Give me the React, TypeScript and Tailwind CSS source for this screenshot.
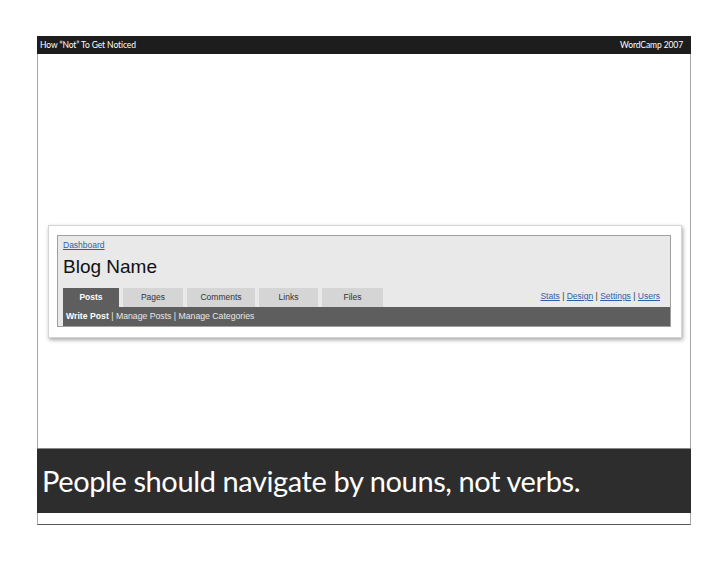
export default function App() {
  const tabs = [
    { label: "Posts", w: "w-[56px]", active: true },
    { label: "Pages", w: "w-[60px]" },
    { label: "Comments", w: "w-[68px]" },
    { label: "Links", w: "w-[59px]" },
    { label: "Files", w: "w-[61px]" },
  ];

  return (
    <div className="w-[728px] h-[563px] bg-white pt-[36px] pl-[37px]">
      <div className="w-[654px] h-[489px] flex flex-col border-x border-b border-x-[#a8a8a8] border-b-[#555]">
        {/* slide header */}
        <div className="h-[18px] -mx-px bg-[#1d1d1d] flex items-center justify-between pl-[3px] pr-[8px] text-white text-[8.5px] font-['Lato',sans-serif] tracking-[-0.1px]">
          <span>How “Not” To Get Noticed</span>
          <span>WordCamp 2007</span>
        </div>

        {/* screenshot area */}
        <div className="flex-1 pt-[171px] pl-[10px]">
          <div className="w-[634px] h-[113px] bg-white border border-[#d4d4d4] shadow-[1px_2px_4px_rgba(0,0,0,0.35)] pt-[9px] pl-[8px]">
            <div className="w-[614px] h-[92px] bg-[#e9e9e9] border border-[#a0a0a0] flex flex-col font-['Liberation_Sans',Arial,sans-serif]">
              <div className="pl-[5px] pt-[4px] h-[20px] text-[8.5px] leading-[10px]">
                <span className="text-[#2f5fa8] underline">Dashboard</span>
              </div>
              <div className="pl-[5px] h-[32px] flex items-start">
                <span className="text-[19px] leading-[22px] text-[#111]">Blog Name</span>
              </div>
              <div className="flex items-end justify-between pl-[5px] pr-[10px] h-[19px]">
                <div className="flex gap-[4px] h-[19px]">
                  {tabs.map((t) => (
                    <div
                      key={t.label}
                      className={
                        t.active
                          ? `${t.w} bg-[#5e5e5e] text-white font-bold text-[8.5px] flex items-center justify-center`
                          : `${t.w} bg-[#d5d5d5] text-[#333] text-[8.5px] flex items-center justify-center`
                      }
                    >
                      {t.label}
                    </div>
                  ))}
                </div>
                <div className="text-[8.5px] leading-[10px] text-[#333] pb-[6px]">
                  <span className="text-[#2f5fa8] underline">Stats</span> | <span className="text-[#2f5fa8] underline">Design</span> | <span className="text-[#2f5fa8] underline">Settings</span> | <span className="text-[#2f5fa8] underline">Users</span>
                </div>
              </div>
              <div className="ml-[5px] flex-1 bg-[#5e5e5e] flex items-center pl-[3px] text-[8.7px] text-[#e8e8e8]">
                <span className="font-bold text-white">Write Post</span>
                <span>&nbsp;| Manage Posts | Manage Categories</span>
              </div>
            </div>
          </div>
        </div>

        {/* caption */}
        <div className="h-[65px] -mx-px bg-[#2d2d2d] border-t border-[#888] flex items-center pl-[5px] text-white text-[29px] font-['Lato',sans-serif] tracking-[-0.4px]">
          People should navigate by nouns, not verbs.
        </div>
        <div className="h-[11px]" />
      </div>
    </div>
  );
}
